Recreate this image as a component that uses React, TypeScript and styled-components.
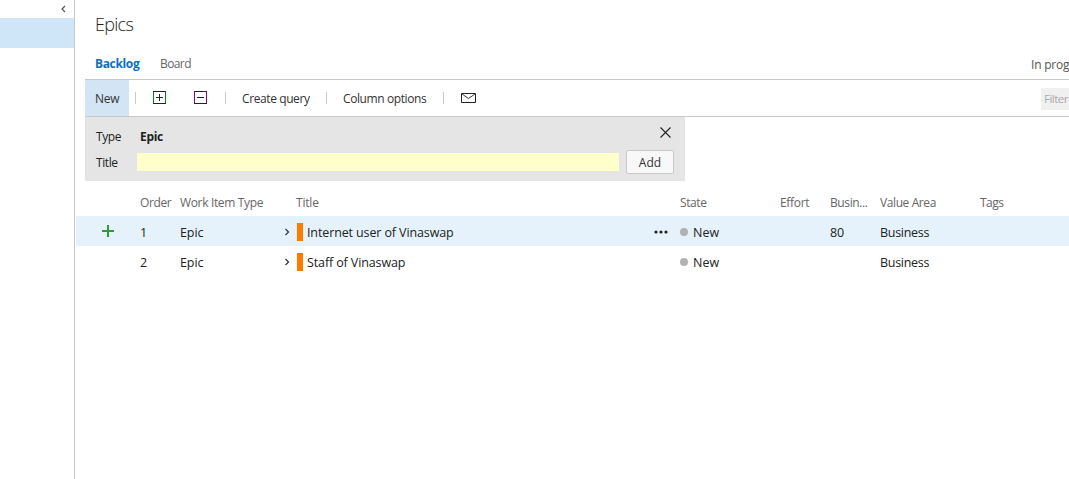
import React from "react";
import styled, { createGlobalStyle } from "styled-components";

const Global = createGlobalStyle`
  * { box-sizing: border-box; }
  body { margin: 0; background: #fff; overflow: hidden; }
  body, button, input { font-family: "Open Sans", "Noto Sans", sans-serif; font-size: 12px; color: #222; }
`;

const Page = styled.div`display: flex; width: 100vw; height: 479px; overflow: hidden;`;
const Sidebar = styled.aside`flex: none; width: 75px; border-right: 1px solid #c8c8c8;`;
const Collapse = styled.div`
  height: 18px; display: flex; justify-content: flex-end; padding: 5px 8px 0 0;
`;
const Selected = styled.div`height: 30px; background: #cee6f8;`;
const Main = styled.main`flex: 1; min-width: 0; padding-left: 1px;`;
const Heading = styled.h1`
  margin: 0; height: 50px; padding-left: 19px; font-size: 18px; font-weight: 300;
  line-height: 49px; color: #222; letter-spacing: -0.7px;
`;
const Tabs = styled.nav`display: flex; height: 29px; padding-left: 19px; line-height: 27px;`;
const Tab = styled.span<{ $active?: boolean; $w: number }>`
  width: ${p => p.$w}px; white-space: nowrap;
  color: ${p => (p.$active ? "#106ebe" : "#666")};
  font-weight: ${p => (p.$active ? 700 : 400)};
  letter-spacing: ${p => (p.$active ? -0.35 : -0.6)}px;
`;
const Progress = styled(Tab)`
  margin-left: auto; flex: none; color: #555; letter-spacing: -0.2px; line-height: 29px;
`;
const Toolbar = styled.div`
  display: flex; align-items: center; height: 38px; margin-left: 9px;
  border-top: 1px solid #c8c8c8; border-bottom: 1px solid #c8c8c8;
`;
const NewButton = styled.span`
  width: 44px; height: 36px; line-height: 38px; padding-left: 10px; background: #d3e5f5; color: #333;
  letter-spacing: -0.3px;
`;
const Separator = styled.i<{ $l: number }>`
  width: 1px; height: 12px; margin-left: ${p => p.$l}px; background: #c8c8c8;
`;
const ToolIcon = styled.span<{ $l: number }>`display: flex; margin: -1px 0 0 ${p => p.$l}px;`;
const ToolText = styled.span<{ $w: number }>`
  margin-left: 16px; width: ${p => p.$w}px; white-space: nowrap; letter-spacing: -0.4px;
  color: #333; line-height: 36px; padding-top: 1px;
`;
const Filter = styled.span`
  flex: none; width: 28px; height: 22px; margin: 1px 0 0 auto; padding-left: 3px; overflow: hidden;
  line-height: 22px; background: #f0f0f0; color: #aaa; font-size: 11.5px; letter-spacing: -0.5px;
`;
const Form = styled.div`
  width: 600px; height: 64px; margin-left: 9px; padding-top: 3px; background: #e5e5e5;
`;
const FormRow = styled.div<{ $h: number }>`
  display: flex; align-items: center; height: ${p => p.$h}px; padding: 0 11px;
`;
const Label = styled.label`width: 41px; letter-spacing: -0.4px;`;
const TypeName = styled.b`padding-left: 3px; flex: 1; letter-spacing: -0.3px;`;
const CloseIcon = styled.svg`margin-top: -9px;`;
const TitleInput = styled.input`
  width: 482px; height: 18px; border: 0; padding: 0 3px; background: #ffc; outline: none;
`;
const AddButton = styled.button`
  width: 48px; height: 24px; margin-left: 7px; padding: 0; border: 1px solid #c8c8c8;
  border-radius: 2px; background: #f8f8f8; color: #333;
`;
const Row = styled.div<{ $head?: boolean; $on?: boolean }>`
  display: grid; align-items: center;
  grid-template-columns: 64px 40px 104px 12px 384px 100px 50px 50px 100px 1fr;
  height: ${p => (p.$head ? 35 : 30)}px;
  padding-top: ${p => (p.$head ? 8 : 2)}px;
  background: ${p => (p.$on ? "#e5f2fb" : "transparent")};
  color: ${p => (p.$head ? "#666" : "#222")};
  font-size: ${p => (p.$head ? 12 : 12.5)}px;
`;
const Cell = styled.span<{ $ls?: number }>`
  white-space: nowrap; letter-spacing: ${p => p.$ls ?? -0.4}px;
`;
const Center = styled.span`display: flex; align-items: center; margin-top: -2px;`;
const AddCell = styled(Center)`padding-left: 26px;`;
const TitleCell = styled(Center)`padding-left: 1px; padding-right: 12px;`;
const Bar = styled.i`width: 6px; height: 18px; margin: 2px 4px 0 0; background: #ff7b00;`;
const TitleText = styled.span`
  flex: 1; padding-top: 2px; letter-spacing: -0.12px; white-space: nowrap;
`;
const MoreIcon = styled.svg`margin-top: 2px;`;
const StateCell = styled.span`display: flex; align-items: center;`;
const Dot = styled.i`width: 8px; height: 8px; margin: -1px 5px 0 0; border-radius: 50%; background: #b2b2b2;`;

const BoxIcon = ({ color, plus }: { color: string; plus?: boolean }) => (
  <svg width="13" height="13" fill="none" shapeRendering="crispEdges">
    <path d="M.5 0v13M12.5 0v13" stroke={color} />
    <path d="M0 .5h13M0 12.5h13" stroke="#222" />
    <path d={plus ? "M3 6.5h7M6.5 3v7" : "M3 6.5h7"} stroke="#222" />
  </svg>
);
const Chevron = () => (
  <svg width="6" height="8" fill="none"><path d="M1.5 1l3 3-3 3" stroke="#333" strokeWidth="1.2" /></svg>
);

const items = [
  { order: 1, title: "Internet user of Vinaswap", value: "80", on: true },
  { order: 2, title: "Staff of Vinaswap", value: "", on: false },
];

export default function App() {
  return (
    <Page>
      <Global />
      <Sidebar>
        <Collapse>
          <svg width="5" height="8" fill="none"><path d="M4 1L1 4l3 3" stroke="#555" strokeWidth="1.2" /></svg>
        </Collapse>
        <Selected />
      </Sidebar>
      <Main>
        <Heading>Epics</Heading>
        <Tabs>
          <Tab $active $w={65}>Backlog</Tab>
          <Tab $w={60}>Board</Tab>
          <Progress $w={38}>In prog</Progress>
        </Tabs>
        <Toolbar>
          <NewButton>New</NewButton>
          <Separator $l={6} />
          <ToolIcon $l={17}><BoxIcon color="#107c10" plus /></ToolIcon>
          <ToolIcon $l={28}><BoxIcon color="#920092" /></ToolIcon>
          <Separator $l={18} />
          <ToolText $w={84}>Create query</ToolText>
          <Separator $l={0} />
          <ToolText $w={100}>Column options</ToolText>
          <Separator $l={0} />
          <ToolIcon $l={17}>
            <svg width="15" height="10" fill="none" stroke="#222">
              <path d="M.5.5h14v9H.5z" /><path d="M1 1l6.5 4.5L14 1" strokeWidth=".9" />
            </svg>
          </ToolIcon>
          <Filter>Filter</Filter>
        </Toolbar>
        <Form>
          <FormRow $h={33}>
            <Label as="span">Type</Label>
            <TypeName>Epic</TypeName>
            <CloseIcon width="15" height="13" fill="none">
              <path d="M1.5 1.5l10 10M11.5 1.5l-10 10" stroke="#222" strokeWidth="1.1" />
            </CloseIcon>
          </FormRow>
          <FormRow $h={18}>
            <Label htmlFor="title">Title</Label>
            <TitleInput id="title" />
            <AddButton>Add</AddButton>
          </FormRow>
        </Form>
        <Row $head>
          <Cell />
          <Cell>Order</Cell>
          <Cell $ls={-0.35}>Work Item Type</Cell>
          <Cell />
          <Cell $ls={-0.2}>Title</Cell>
          <Cell>State</Cell>
          <Cell $ls={-0.3}>Effort</Cell>
          <Cell>Busin...</Cell>
          <Cell>Value Area</Cell>
          <Cell $ls={-0.5}>Tags</Cell>
        </Row>
        {items.map(it => (
          <Row key={it.order} $on={it.on}>
            <AddCell>
              {it.on && <svg width="12" height="12" fill="none"><path d="M6 0v12M0 6h12" stroke="#339933" strokeWidth="2" /></svg>}
            </AddCell>
            <Cell>{it.order}</Cell>
            <Cell $ls={-0.1}>Epic</Cell>
            <Chevron />
            <TitleCell>
              <Bar />
              <TitleText>{it.title}</TitleText>
              {it.on && <MoreIcon width="14" height="4" fill="#222"><circle cx="2" cy="2" r="1.6" /><circle cx="7" cy="2" r="1.6" /><circle cx="12" cy="2" r="1.6" /></MoreIcon>}
            </TitleCell>
            <StateCell><Dot />New</StateCell>
            <Cell />
            <Cell $ls={-0.1}>{it.value}</Cell>
            <Cell $ls={-0.3}>Business</Cell>
            <Cell />
          </Row>
        ))}
      </Main>
    </Page>
  );
}
